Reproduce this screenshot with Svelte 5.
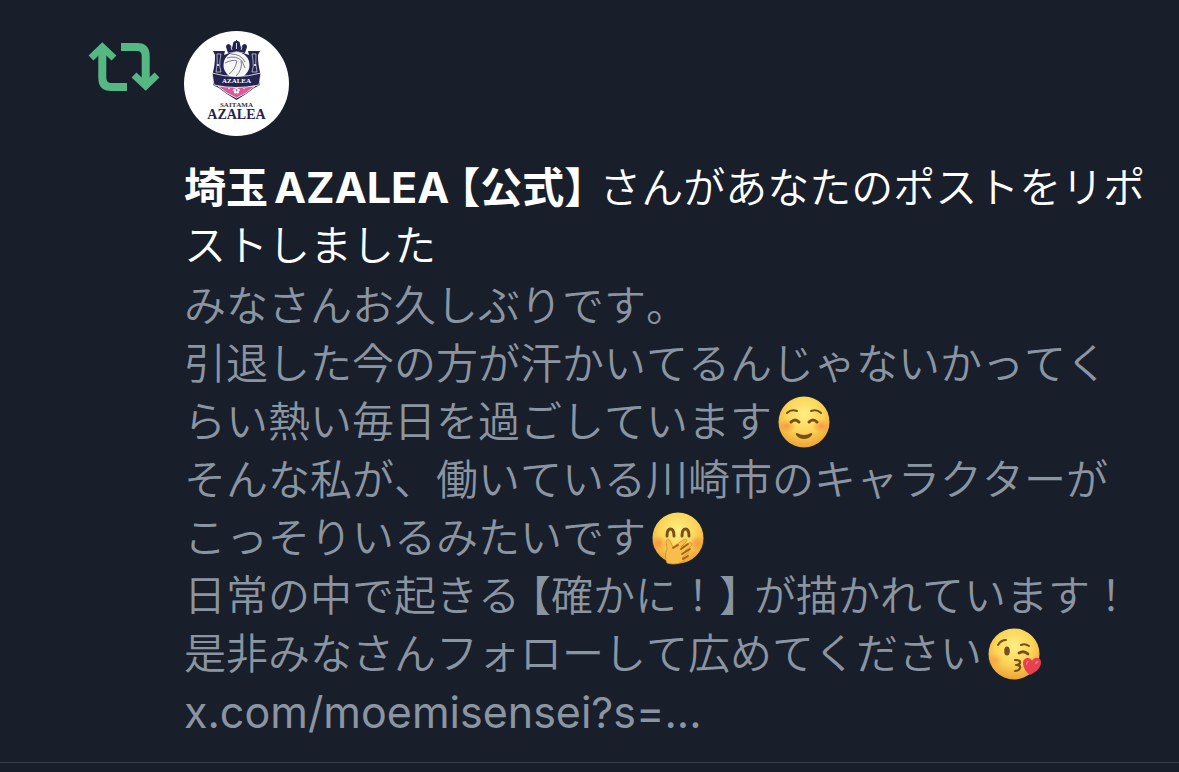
<script>
    const name = { region: '埼玉', team: 'AZALEA', tag: '公式' };
    const action = 'さんがあなたのポストをリポストしました';

    const lines = [
        { text: 'みなさんお久しぶりです。' },
        { text: '引退した今の方が汗かいてるんじゃないかってくらい熱い毎日を過ごしています', emoji: 'smile' },
        { text: 'そんな私が、働いている川崎市のキャラクターがこっそりいるみたいです', emoji: 'giggle' },
        { text: '日常の中で起きる', quote: '確かに！', rest: 'が描かれています！' },
        { text: '是非みなさんフォローして広めてください', emoji: 'kiss' }
    ];
</script>

{#snippet face(kind)}
    <svg class="emoji" viewBox="0 0 52 52" role="img" aria-label={kind}>
        <defs>
            <radialGradient id="skin-{kind}" cx="50%" cy="35%" r="65%">
                <stop offset="0" stop-color="#ffed85" />
                <stop offset="0.55" stop-color="#fcd558" />
                <stop offset="1" stop-color="#eda336" />
            </radialGradient>
            <radialGradient id="blush-{kind}">
                <stop offset="0" stop-color="#f47a35" stop-opacity="0.6" />
                <stop offset="1" stop-color="#f47a35" stop-opacity="0" />
            </radialGradient>
        </defs>
        <circle cx="26" cy="26" r="25.5" fill="url(#skin-{kind})" />
        {#if kind === 'smile'}
            <ellipse cx="9" cy="30" rx="9" ry="7" fill="url(#blush-{kind})" />
            <ellipse cx="43" cy="30" rx="9" ry="7" fill="url(#blush-{kind})" />
            <g fill="none" stroke="#76501b" stroke-linecap="round">
                <path stroke-width="2" d="M9 17q4-4 10-2M33 15q6-2 10 2" />
                <path stroke-width="3" d="M13 26q4-4 8 0M31 26q4-4 8 0" />
            </g>
            <path fill="#76501b" d="M19 37q7 4 14 0q2 0 1 2q-3 4-8 4t-8-4q-1-2 1-2z" />
        {:else if kind === 'giggle'}
            <ellipse cx="7" cy="31" rx="8" ry="8" fill="url(#blush-{kind})" />
            <ellipse cx="45" cy="31" rx="8" ry="8" fill="url(#blush-{kind})" />
            <g fill="none" stroke="#76501b" stroke-width="3" stroke-linecap="round">
                <path d="M15 24q0-7 3.5-7t3.5 7M30 24q0-7 3.5-7t3.5 7" />
            </g>
            <path fill="#f8bd4b" stroke="#d58a29" stroke-width="0.8" stroke-linejoin="round"
                d="M15 51c-2-5-2-9 0-14l-1-7c0-3 3-4 4-1l3 6 10-7c3-2 5 0 3 2l-5 5 8-4c3-1 4 2 2 3l-6 5c3-2 5 0 3 2l-6 5c2-1 4 1 2 3-5 3-11 4-17 2z" />
            <path fill="none" stroke="#a35d1e" stroke-width="1.8" stroke-linecap="round" d="M29 37l7-5M30 42l8-5M31 47l5-3M21 36l5-3" />
        {:else}
            <ellipse cx="7" cy="32" rx="8" ry="7" fill="url(#blush-{kind})" opacity="0.6" />
            <ellipse cx="19" cy="23" rx="2.8" ry="4.5" fill="#76501b" />
            <g fill="none" stroke="#76501b" stroke-linecap="round" stroke-linejoin="round">
                <path stroke-width="2" d="M10 17q3-5 8-5M33 17q4-2 8 1" />
                <path stroke-width="2.8" d="M31 25q5-3 9 1" />
                <path stroke-width="2.2" d="M27 32q6 0 5 3-1 2-4 2 5 0 4 3-1 3-5 3" />
            </g>
            <path fill="#e5414f" d="M42 47c-4-3-7-8-7-12 0-5 7-7 9-2 2-5 9-4 9 1 0 6-5 10-11 13z" />
            <path fill="#ff8b8c" d="M38 36q1-4 3-3-2 1-2 4zM47 35q2-3 4-1-2 0-3 2z" />
        {/if}
    </svg>
{/snippet}

<article class="notification">
    <div class="kind">
        <svg class="repost" viewBox="0 0 72 50" role="img" aria-label="リポスト">
            <g fill="none" stroke="#55b884">
                <path stroke-width="7" d="M3 16L14.3 5L26 16M46 33L57.7 44L69 33" />
                <path stroke-width="8" d="M14.3 7V36q0 9 9 9H39M33 5H49q8.7 0 8.7 9V42" />
            </g>
        </svg>
    </div>

    <div class="content">
        <a class="avatar" href="#profile" aria-label="埼玉AZALEA">
            <svg viewBox="0 0 105 105" aria-hidden="true">
                <circle cx="52.5" cy="52.5" r="52.5" fill="#fff" />
                <!-- crown -->
                <path d="M44 22l-2-6q0-3 3-3 2 1 3 4l1-4q0-3 3-3v-1h1v1q3 0 3 3l1 4q1-3 3-4 3 0 3 3l-2 6q-8-3-17 0z" fill="#25234f" />
                <path d="M48 19l-1-3M52.5 18v-6M57 19l1-3" stroke="#fff" stroke-width="0.8" />
                <!-- shield -->
                <path d="M29 20h12l-1 4q12-6 25 0l-1-4h12l-2 4q0 10 2 17v13l-6 3-8 6-9.500 6-9.500-6-8-6-6-3V41q2-7 2-17z" fill="#25234f" />
                <path d="M33 23h4l-1 6q-1 7 1 12h-5q2-8 1-18zM72 23h-4l1 6q1 7-1 12h5q-2-8-1-18z" fill="none" stroke="#fff" stroke-width="0.6" />
                <circle cx="34" cy="34" r="1" fill="#fff" />
                <circle cx="71" cy="34" r="1" fill="#fff" />
                <!-- ball -->
                <circle cx="52.5" cy="34" r="13" fill="#f6f6f7" />
                <path d="M43 27q9-3 15 3l3 7M47 23q10 0 14 8M41 32q8-4 12-2-2 9-8 13M57 30q2 8-5 15" fill="none" stroke="#77788a" stroke-width="1" />
                <path d="M34 55h37l-9 7-9.500 5L43 62z" fill="#dd5999" stroke="#fff" stroke-width="0.8" />
                <g fill="#fff">
                    <circle cx="52.5" cy="57" r="1.3" />
                    <circle cx="50.5" cy="59" r="1.3" />
                    <circle cx="54.5" cy="59" r="1.3" />
                    <circle cx="51.3" cy="61.3" r="1.3" />
                    <circle cx="53.7" cy="61.3" r="1.3" />
                    <circle cx="45" cy="57.5" r="0.7" />
                    <circle cx="60" cy="57.5" r="0.7" />
                </g>
                <path d="M28 42q24 7 49 0l-2 12q-23 5-45 0z" fill="#25234f" stroke="#fff" stroke-width="0.8" />
                <text class="crest" x="52.5" y="52" font-size="7" fill="#fff">AZALEA</text>
                <text class="crest" x="52.5" y="76" font-size="7" fill="#333349">SAITAMA</text>
                <text class="crest" x="52.5" y="88" font-size="14" fill="#25234f">AZALEA</text>
            </svg>
        </a>

        <p class="title">
            <strong>{name.region}<span class="team">{name.team}</span><span class="open">【</span>{name.tag}<span class="close">】</span></strong>{action}
        </p>

        <div class="post">
            {#each lines as line}
                <p>{line.text}{#if line.quote}<span class="open">【</span>{line.quote}<span class="close">】</span>{line.rest}{/if}{#if line.emoji}{@render face(line.emoji)}{/if}</p>
            {/each}
            <p class="link">x.com/moemisensei?s=...</p>
        </div>
    </div>
</article>

<style>
    :global(body) {
        margin: 0;
        background: #191f2a;
    }

    .notification {
        display: flex;
        gap: 24px;
        padding: 31px 31px 21px 88px;
        border-bottom: 1px solid #37404b;
        color: #fff;
        font-family: Inter, "Noto Sans CJK JP", sans-serif;
        font-size: 42px;
        font-weight: 350;
        font-kerning: none;
        line-height: 58px;
    }

    .kind {
        flex: none;
        width: 72px;
        padding-top: 11px;
    }

    .repost {
        display: block;
        width: 72px;
        height: 50px;
    }

    .content {
        flex: 1;
        min-width: 0;
    }

    .avatar {
        display: block;
        width: 105px;
        height: 105px;
        margin-bottom: 22px;
    }

    .avatar svg {
        display: block;
    }

    .crest {
        font-family: "Liberation Serif", serif;
        font-weight: 700;
        text-anchor: middle;
    }

    p {
        margin: 0;
    }

    strong {
        font-weight: 700;
    }

    .team,
    .link {
        font-size: 43px;
        font-kerning: normal;
    }

    .team {
        margin-left: 6px;
    }

    .open,
    .close {
        font-feature-settings: "halt";
    }

    .open {
        margin-left: 10px;
    }

    .close {
        margin-right: 14px;
    }

    .post {
        margin-top: 2px;
        padding-right: 12px;
        color: #8b95a2;
    }

    .emoji {
        width: 52px;
        height: 52px;
        margin-left: 6px;
        vertical-align: -11px;
        overflow: visible;
    }

    .link {
        font-weight: 400;
    }
</style>
